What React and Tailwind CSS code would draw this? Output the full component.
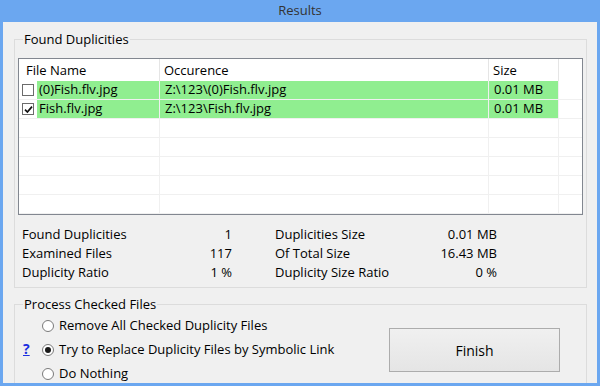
import React from 'react';

const files = [
  { name: '(0)Fish.flv.jpg', path: 'Z:\\123\\(0)Fish.flv.jpg', size: '0.01 MB', checked: false },
  { name: 'Fish.flv.jpg', path: 'Z:\\123\\Fish.flv.jpg', size: '0.01 MB', checked: true },
];

const stats = [
  ['Found Duplicities', '1', 'Duplicities Size', '0.01 MB'],
  ['Examined Files', '117', 'Of Total Size', '16.43 MB'],
  ['Duplicity Ratio', '1 %', 'Duplicity Size Ratio', '0 %'],
];

const options = [
  { label: 'Remove All Checked Duplicity Files', selected: false },
  { label: 'Try to Replace Duplicity Files by Symbolic Link', selected: true, help: true },
  { label: 'Do Nothing', selected: false },
];

function CheckBox({ checked }) {
  return (
    <span className="w-[12px] h-[12px] border border-[#6b6b6b] bg-white flex items-center justify-center">
      {checked && (
        <svg width="9" height="9" viewBox="0 0 9 9">
          <path d="M1 4.6 L3.4 7 L8 1.6" fill="none" stroke="#111" strokeWidth="1.7" />
        </svg>
      )}
    </span>
  );
}

function Radio({ selected }) {
  return (
    <span className="w-[12px] h-[12px] rounded-full border border-[#7a7a7a] bg-white flex items-center justify-center shrink-0">
      {selected && <span className="w-[6px] h-[6px] rounded-full bg-[#1a1a1a]" />}
    </span>
  );
}

function FileRow({ file }) {
  if (!file) {
    return (
      <div className="h-[19px] shrink-0 flex border-b border-[#f0f0f0]">
        <div className="w-[141px] border-r border-[#f0f0f0]" />
        <div className="w-[329px] border-r border-[#f0f0f0]" />
        <div className="w-[70px] border-r border-[#f0f0f0]" />
        <div className="flex-1" />
      </div>
    );
  }
  return (
    <div className="h-[19px] shrink-0 flex border-b border-[#f0f0f0]">
      <div className="w-[141px] border-r border-[#f0f0f0] flex">
        <div className="w-[18px] flex items-center pl-[3px]">
          <CheckBox checked={file.checked} />
        </div>
        <div className="flex-1 bg-[#90ee90] pl-[2px] flex items-center">{file.name}</div>
      </div>
      <div className="w-[329px] border-r border-[#f0f0f0] bg-[#90ee90] pl-[5px] flex items-center">
        {file.path}
      </div>
      <div className="w-[70px] border-r border-[#f0f0f0] bg-[#90ee90] pl-[5px] flex items-center">
        {file.size}
      </div>
      <div className="flex-1" />
    </div>
  );
}

export default function App() {
  const rows = [...files, null, null, null, null, null];

  return (
    <div className="w-[600px] h-[386px] bg-[#6ba7f0] flex flex-col px-[3px] pb-[3px] overflow-hidden font-['Open_Sans','Noto_Sans',sans-serif] text-[13px] text-black">
      {/* Title bar */}
      <div className="h-[22px] shrink-0 flex items-center justify-center text-[#333] text-[13px]">
        Results
      </div>

      <div className="flex-1 bg-[#f0f0f0] pl-[11px] pr-[10px] pt-[9px] overflow-hidden">
        {/* Found Duplicities */}
        <fieldset className="border border-[#dcdcdc] px-[3px] pb-[5px]">
          <legend className="ml-[5px] px-[1px] leading-[16px]">Found Duplicities</legend>

          <div className="mt-[11px] h-[157px] border border-[#828790] bg-white flex flex-col overflow-hidden">
            <div className="h-[22px] shrink-0 flex">
              <div className="w-[141px] border-r border-[#e5e5e5] pl-[7px] pt-[2px] flex items-center">
                File Name
              </div>
              <div className="w-[329px] border-r border-[#e5e5e5] pl-[4px] pt-[2px] flex items-center">
                Occurence
              </div>
              <div className="w-[70px] border-r border-[#e5e5e5] pl-[4px] pt-[2px] flex items-center">
                Size
              </div>
              <div className="flex-1" />
            </div>
            {rows.map((file, i) => (
              <FileRow key={i} file={file} />
            ))}
          </div>

          <div className="mt-[10px] pl-[4px] flex flex-col">
            {stats.map(([a, av, b, bv]) => (
              <div key={a} className="h-[19px] flex items-center">
                <div className="w-[210px] flex justify-between">
                  <span>{a}</span>
                  <span>{av}</span>
                </div>
                <div className="ml-[43px] w-[222px] flex justify-between">
                  <span>{b}</span>
                  <span>{bv}</span>
                </div>
              </div>
            ))}
          </div>
        </fieldset>

        {/* Process Checked Files */}
        <fieldset className="mt-[8px] border border-[#dcdcdc] px-[3px] pb-[10px]">
          <legend className="ml-[5px] px-[1px] leading-[16px]">Process Checked Files</legend>

          <div className="mt-[2px] flex items-center justify-between">
            <div className="flex flex-col">
              {options.map((opt) => (
                <div key={opt.label} className="h-[24px] flex items-center">
                  <div className="w-[24px] pl-[5px]">
                    {opt.help && (
                      <span className="text-[14px] font-bold text-[#1c2fe0] underline leading-none">?</span>
                    )}
                  </div>
                  <Radio selected={opt.selected} />
                  <span className="ml-[5px]">{opt.label}</span>
                </div>
              ))}
            </div>
            <button className="mr-[23px] w-[171px] h-[44px] border border-[#acacac] bg-gradient-to-b from-[#f0f0f0] to-[#e5e5e5] text-[14px]">
              Finish
            </button>
          </div>
        </fieldset>
      </div>
    </div>
  );
}
